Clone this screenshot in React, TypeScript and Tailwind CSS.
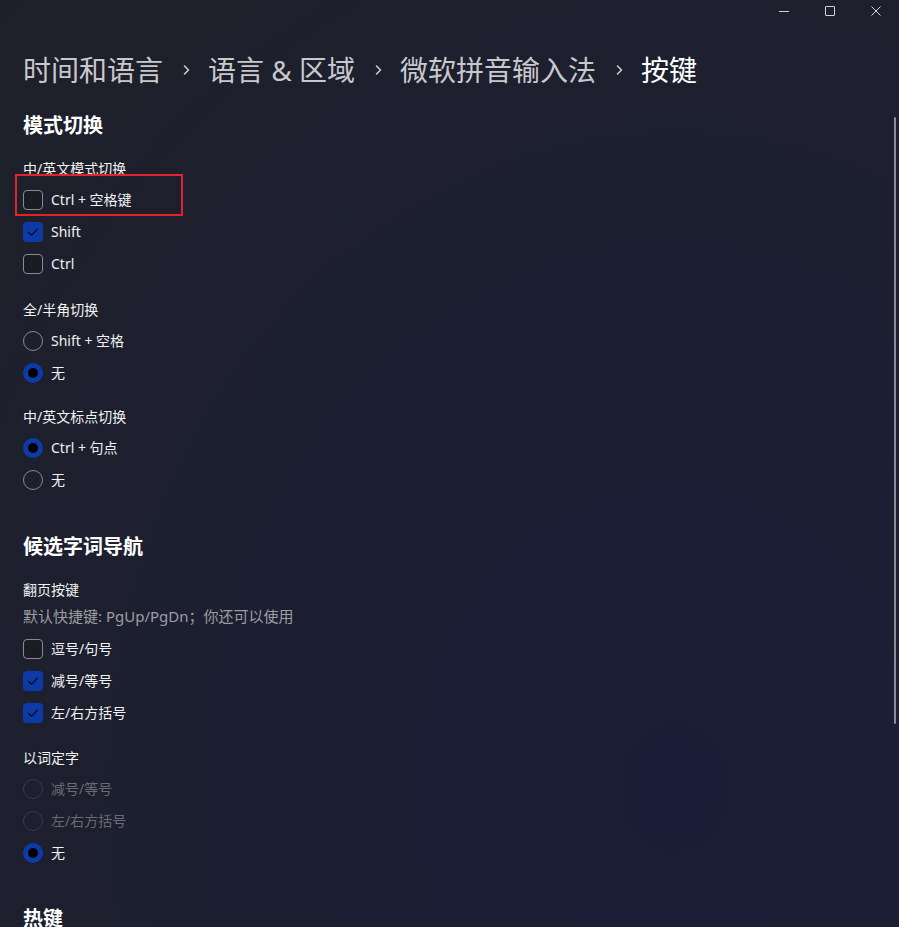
import React from 'react';

const font = { fontFamily: '"Noto Sans", "Noto Sans CJK SC", sans-serif' };

function Chevron() {
  return (
    <svg width="7" height="12" viewBox="0 0 7 12" className="ml-[20px] mr-[18px] shrink-0">
      <path d="M1.5 2 L5.5 6 L1.5 10" fill="none" stroke="#c9c9cd" strokeWidth="1.6" strokeLinecap="round" strokeLinejoin="round" />
    </svg>
  );
}

function Checkbox({ label, checked, highlight }: { label: string; checked?: boolean; highlight?: boolean }) {
  return (
    <div className="relative flex items-center h-8 gap-2">
      {checked ? (
        <div className="w-5 h-5 rounded-[4px] bg-[#0c3ba8] flex items-center justify-center">
          <svg width="20" height="20" viewBox="0 0 20 20">
            <path d="M5.5 10.2 L8.6 13.2 L14.5 7.2" fill="none" stroke="#05070d" strokeWidth="1.2" strokeLinecap="round" strokeLinejoin="round" />
          </svg>
        </div>
      ) : (
        <div className="w-5 h-5 rounded-[4px] border border-[#8a8b91] bg-[#1a1c24]" />
      )}
      <span className="text-[14px] text-[#f2f2f2] leading-5">{label}</span>
      {highlight && (
        <div className="absolute left-[-8px] top-[-10px] w-[168px] h-[42px] border-2 border-[#e3232c]" />
      )}
    </div>
  );
}

function Radio({ label, checked, disabled }: { label: string; checked?: boolean; disabled?: boolean }) {
  return (
    <div className="flex items-center h-8 gap-2">
      {checked ? (
        <div className="w-5 h-5 rounded-full bg-[#0c3ba8] flex items-center justify-center">
          <div className="w-[10px] h-[10px] rounded-full bg-black" />
        </div>
      ) : (
        <div className={`w-5 h-5 rounded-full border ${disabled ? 'border-[#3a3c46]' : 'border-[#8a8b91]'}`} />
      )}
      <span className={`text-[14px] leading-5 ${disabled ? 'text-[#6a6b72]' : 'text-[#f2f2f2]'}`}>{label}</span>
    </div>
  );
}

function SubHeader({ children, className = 'h-8' }: { children: React.ReactNode; className?: string }) {
  return <div className={`flex items-center text-[14px] text-[#f2f2f2] ${className}`}>{children}</div>;
}

function SectionHeader({ children, className = '' }: { children: React.ReactNode; className?: string }) {
  return <div className={`h-7 flex items-center text-[20px] font-semibold text-white ${className}`}>{children}</div>;
}

export default function App() {
  return (
    <div
      style={font}
      className="relative w-[899px] h-[927px] overflow-hidden bg-[radial-gradient(ellipse_at_75%_85%,#1b1d38_0%,#1c1f31_45%,#1e2029_100%)]"
    >
      {/* title bar */}
      <div className="h-8 flex justify-end">
        <div className="w-[46px] h-[22px] flex items-center justify-center">
          <div className="w-[10px] h-px bg-[#d6d6d8]" />
        </div>
        <div className="w-[46px] h-[22px] flex items-center justify-center">
          <div className="w-[10px] h-[10px] border border-[#d6d6d8] rounded-[1px]" />
        </div>
        <div className="w-[46px] h-[22px] flex items-center justify-center">
          <svg width="10" height="10" viewBox="0 0 10 10">
            <path d="M0.5 0.5 L9.5 9.5 M9.5 0.5 L0.5 9.5" stroke="#d6d6d8" strokeWidth="1" />
          </svg>
        </div>
      </div>

      <div className="pl-[23px]">
        {/* breadcrumb */}
        <div className="mt-[18px] h-10 flex items-center text-[28px] leading-10">
          <span className="text-[#c9c9cd]">时间和语言</span>
          <Chevron />
          <span className="text-[#c9c9cd]">语言 &amp; 区域</span>
          <Chevron />
          <span className="text-[#c9c9cd]">微软拼音输入法</span>
          <Chevron />
          <span className="text-white">按键</span>
        </div>

        <SectionHeader className="mt-[22px]">模式切换</SectionHeader>
        <SubHeader className="h-8 mt-3">中/英文模式切换</SubHeader>
        <Checkbox label="Ctrl + 空格键" highlight />
        <Checkbox label="Shift" checked />
        <Checkbox label="Ctrl" />

        <SubHeader className="h-8 mt-[13px]">全/半角切换</SubHeader>
        <Radio label="Shift + 空格" />
        <Radio label="无" checked />

        <SubHeader className="h-8 mt-[11px]">中/英文标点切换</SubHeader>
        <Radio label="Ctrl + 句点" checked />
        <Radio label="无" />

        <SectionHeader className="mt-[37px]">候选字词导航</SectionHeader>
        <SubHeader className="h-6 mt-4">翻页按键</SubHeader>
        <div className="h-6 mt-[3px] flex items-center text-[15px] text-[#9d9ea3]">默认快捷键: PgUp/PgDn；你还可以使用</div>
        <div className="mt-[5px]">
          <Checkbox label="逗号/句号" />
          <Checkbox label="减号/等号" checked />
          <Checkbox label="左/右方括号" checked />
        </div>

        <SubHeader className="h-8 mt-3">以词定字</SubHeader>
        <Radio label="减号/等号" disabled />
        <Radio label="左/右方括号" disabled />
        <Radio label="无" checked />

        <SectionHeader className="mt-9">热键</SectionHeader>
      </div>

      {/* overlay scrollbar */}
      <div className="absolute right-[3px] top-[117px] w-[2px] h-[607px] rounded-full bg-[#8b8c97]" />
    </div>
  );
}
